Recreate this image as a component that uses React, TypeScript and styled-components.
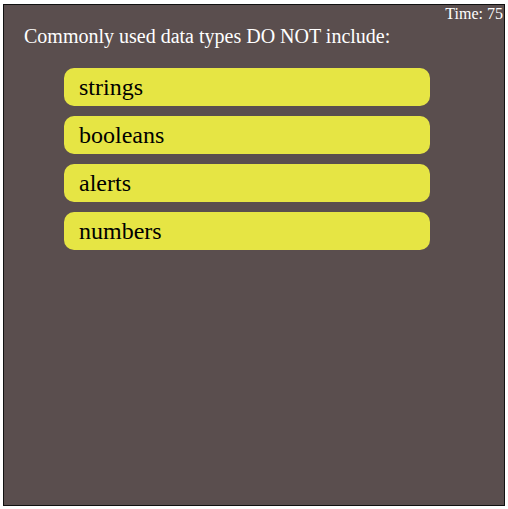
import React from "react";
import styled, { createGlobalStyle } from "styled-components";

const serif = `"Liberation Serif", "Times New Roman", serif`;

const Global = createGlobalStyle`
  html, body { margin: 0; padding: 0; background: #ffffff; }
  body { font-family: ${serif}; }
`;

const Frame = styled.div`
  box-sizing: border-box;
  margin: 4px 0 0 3px;
  width: 502px;
  height: 502px;
  border: 1px solid #111;
  background: #5a4e4e;
  display: flex;
  flex-direction: column;
  font-family: ${serif};
`;

const TimeRow = styled.div`
  color: #ffffff;
  font-size: 16px;
  line-height: 18px;
  text-align: right;
  padding: 0 1px 0 0;
  height: 18px;
`;

const Title = styled.h1`
  margin: 2px 0 0 20px;
  color: #ffffff;
  font-family: ${serif};
  font-size: 20px;
  font-weight: normal;
  line-height: 23px;
`;

const Options = styled.div`
  margin: 20px 0 0 60px;
  display: flex;
  flex-direction: column;
  gap: 10px;
  width: 366px;
`;

const Option = styled.button`
  box-sizing: border-box;
  height: 38px;
  width: 100%;
  border: none;
  background: #e6e544;
  border-radius: 10px;
  padding: 6px 15px 0;
  margin: 0;
  color: #000;
  font-family: ${serif};
  font-size: 24px;
  line-height: 27px;
  text-align: left;
  display: flex;
  align-items: flex-start;
  cursor: pointer;
`;

const answers = ["strings", "booleans", "alerts", "numbers"];

export default function App() {
  return (
    <>
      <Global />
      <Frame>
        <TimeRow>Time: 75</TimeRow>
        <Title>Commonly used data types DO NOT include:</Title>
        <Options>
          {answers.map((a) => (
            <Option key={a}>{a}</Option>
          ))}
        </Options>
      </Frame>
    </>
  );
}
